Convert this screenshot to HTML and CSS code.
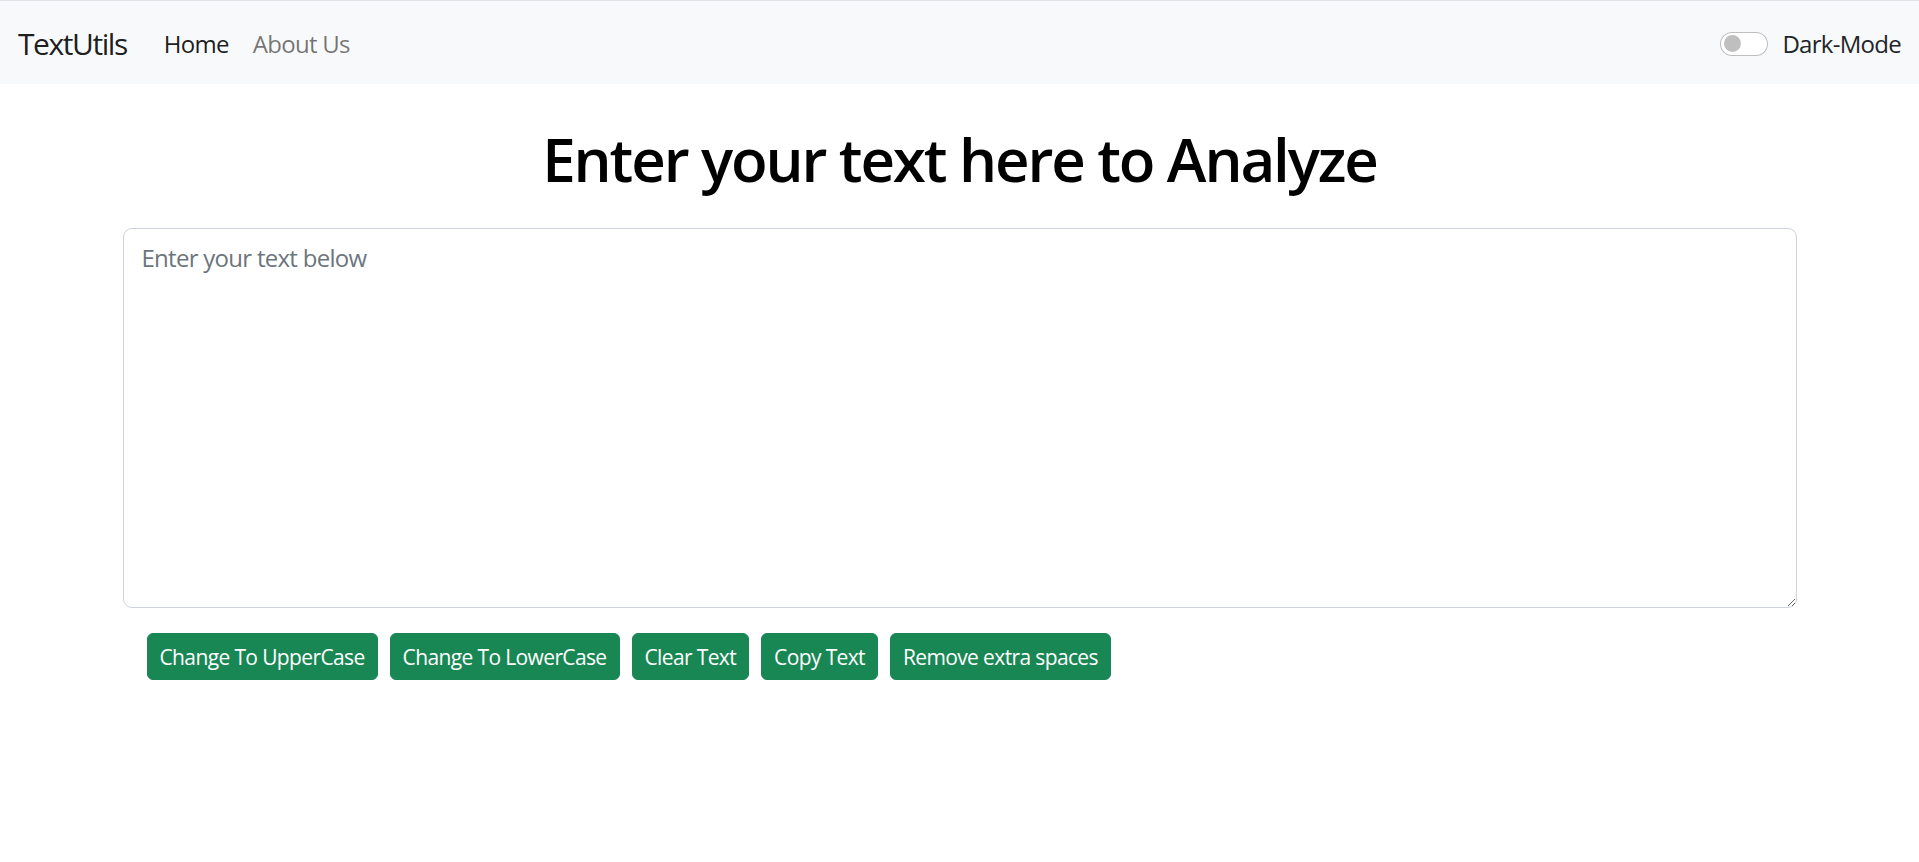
FILE: index.html
```html
<!DOCTYPE html>
<html lang="en">
<head>
<meta charset="utf-8">
<title>TextUtils</title>
<link rel="stylesheet" href="styles.css">
</head>
<body>
<nav class="navbar">
  <div class="nav-left">
    <a class="brand" href="#">TextUtils</a>
    <ul class="nav-links">
      <li><a class="nav-link active" href="#">Home</a></li>
      <li><a class="nav-link" href="#">About Us</a></li>
    </ul>
  </div>
  <div class="switch">
    <span class="switch-track"><span class="switch-knob"></span></span>
    <label class="switch-label">Dark-Mode</label>
  </div>
</nav>
<main class="container">
  <h1 class="title">Enter your text here to Analyze</h1>
  <div class="field">
    <textarea class="textbox" rows="10" placeholder="Enter your text below"></textarea>
  </div>
  <div class="actions"><button class="btn">Change To UpperCase</button><button class="btn">Change To LowerCase</button><button class="btn">Clear Text</button><button class="btn">Copy Text</button><button class="btn">Remove extra spaces</button></div>
</main>
</body>
</html>
```
FILE: styles.css
```css
* { box-sizing: border-box; }
html, body { margin: 0; padding: 0; }
body {
  font-family: "Open Sans", "Noto Sans", sans-serif;
  font-size: 24px;
  letter-spacing: -0.03em;
  color: #212529;
  background: #fff;
  border-top: 1px solid #dee2e6;
}
.navbar {
  height: 83px;
  background: #f8f9fa;
  display: flex;
  align-items: center;
  justify-content: space-between;
  padding: 2px 18px 0;
}
.nav-left { display: flex; align-items: center; }
.brand {
  font-size: 30px;
  letter-spacing: -0.048em;
  color: rgba(0,0,0,.9);
  text-decoration: none;
  margin-right: 25px;
}
.nav-links { list-style: none; display: flex; margin: 0; padding: 0; }
.nav-link {
  display: block;
  padding: 0 12px;
  color: rgba(0,0,0,.55);
  text-decoration: none;
  font-size: 24px;
}
.nav-link.active { color: rgba(0,0,0,.9); }
.switch { display: flex; align-items: center; }
.switch-track {
  width: 48px;
  height: 24px;
  border: 1px solid rgba(0,0,0,.25);
  border-radius: 12px;
  background: #fff;
  display: flex;
  align-items: center;
  padding-left: 3px;
  margin-right: 14px;
}
.switch-knob {
  width: 17px;
  height: 17px;
  border-radius: 50%;
  background: #bfbfbf;
}
.switch-label { color: #212529; font-size: 24px; }
.container {
  width: 1710px;
  margin: 0 auto;
  padding: 0 18px;
}
.title {
  margin: 39px 0 33px;
  text-align: center;
  font-size: 60px;
  font-weight: 600;
  letter-spacing: -0.035em;
  line-height: 72px;
  color: #000;
}
.field { margin-bottom: 25px; }
.textbox {
  display: block;
  width: 100%;
  height: 380px;
  padding: 11px 18px 7px;
  font-family: inherit;
  font-size: 24px;
  letter-spacing: -0.03em;
  line-height: 1.5;
  color: #212529;
  border: 1px solid #ced4da;
  border-radius: 9px;
  resize: vertical;
}
.textbox::placeholder { color: #6c757d; }
.actions { display: flex; padding-left: 18px; }
.btn {
  margin: 0 6px;
  height: 47px;
  padding: 0 12px;
  font-family: inherit;
  font-size: 21px;
  letter-spacing: -0.03em;
  color: #fff;
  background: #198754;
  border: 1px solid #198754;
  border-radius: 6px;
}
```
